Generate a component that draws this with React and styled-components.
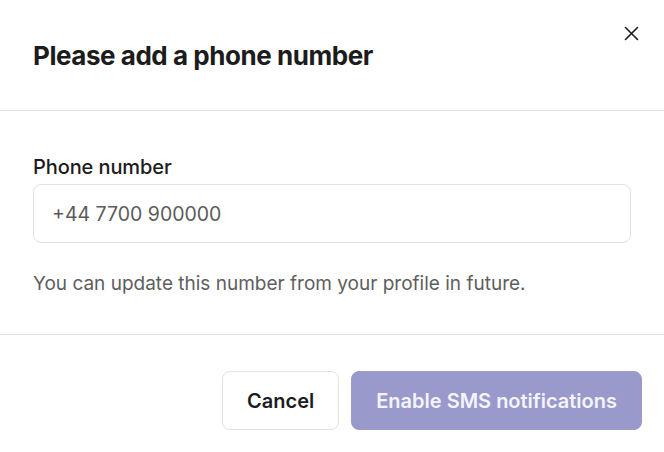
import React from "react";
import styled, { createGlobalStyle } from "styled-components";

const Global = createGlobalStyle`
  html, body { margin: 0; padding: 0; background: #fff; }
  body { font-family: Inter, "Noto Sans", sans-serif; color: #1a1a1a; }
`;

const Dialog = styled.div`
  width: 664px;
  height: 452px;
  background: #fff;
  position: relative;
  display: flex;
  flex-direction: column;
`;

const Header = styled.div`
  height: 111px;
  box-sizing: border-box;
  padding: 0 33px;
  display: flex;
  align-items: center;
  border-bottom: 1px solid #e4e4e4;
`;

const Title = styled.h2`
  margin: 0;
  font-size: 26px;
  font-weight: 700;
  letter-spacing: -0.45px;
  color: #1c1c1c;
`;

const Close = styled.button`
  position: absolute;
  top: 24px;
  right: 24px;
  width: 18px;
  height: 18px;
  padding: 0;
  border: 0;
  background: none;
  display: flex;
  align-items: center;
  justify-content: center;
  cursor: pointer;
`;

const Body = styled.div`
  padding: 44px 33px 0;
  height: 224px;
  box-sizing: border-box;
  border-bottom: 1px solid #e4e4e4;
`;

const Label = styled.label`
  display: block;
  font-size: 20px;
  line-height: 24px;
  font-weight: 500;
  letter-spacing: -0.1px;
  color: #1c1c1c;
  margin-bottom: 5px;
`;

const Input = styled.input`
  display: block;
  box-sizing: border-box;
  width: 598px;
  height: 59px;
  border: 1px solid #e2e2e2;
  border-radius: 8px;
  padding: 0 18px;
  font-family: inherit;
  font-size: 19.5px;
  color: #1c1c1c;
  outline: none;
  &::placeholder { color: #5b5b5b; }
`;

const Hint = styled.p`
  margin: 29px 0 0;
  font-size: 19px;
  line-height: 23px;
  color: #5e5e5e;
`;

const Footer = styled.div`
  display: flex;
  justify-content: flex-end;
  gap: 12px;
  padding: 36px 22px 0;
`;

const Button = styled.button`
  height: 59px;
  border-radius: 8px;
  font-family: inherit;
  font-size: 20px;
  font-weight: 600;
  padding: 0 24px;
  cursor: pointer;
  border: 1px solid ${p => (p.$primary ? "#9999cc" : "#e2e2e2")};
  background: ${p => (p.$primary ? "#9999cc" : "#fff")};
  color: ${p => (p.$primary ? "#f4f4fb" : "#1c1c1c")};
`;

export default function App() {
  return (
    <Dialog>
      <Global />
      <Header>
        <Title>Please add a phone number</Title>
      </Header>
      <Close aria-label="Close">
        <svg width="15" height="15" viewBox="0 0 15 15" fill="none" stroke="#1c1c1c" strokeWidth="1.6" strokeLinecap="round">
          <path d="M1.5 1.5l12 12M13.5 1.5l-12 12" />
        </svg>
      </Close>
      <Body>
        <Label htmlFor="phone">Phone number</Label>
        <Input id="phone" placeholder="+44 7700 900000" />
        <Hint>You can update this number from your profile in future.</Hint>
      </Body>
      <Footer>
        <Button>Cancel</Button>
        <Button $primary>Enable SMS notifications</Button>
      </Footer>
    </Dialog>
  );
}
